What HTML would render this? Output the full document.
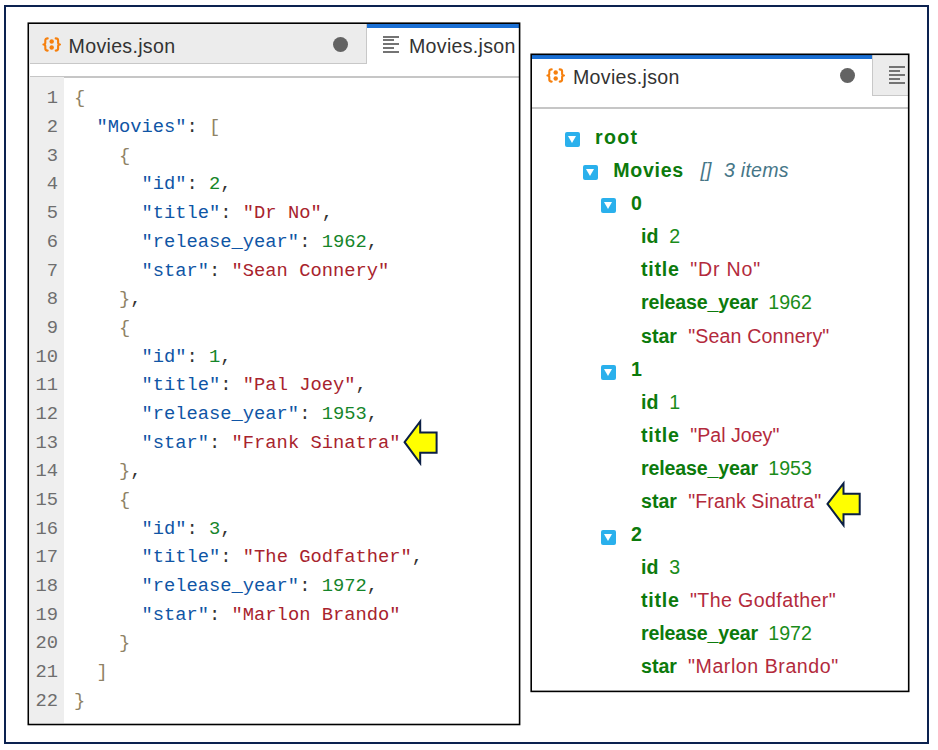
<!DOCTYPE html>
<html><head><meta charset="utf-8">
<style>
*{margin:0;padding:0;box-sizing:border-box}
html,body{width:938px;height:750px;background:#fff;overflow:hidden;position:relative;font-family:"Liberation Sans",sans-serif}
.abs{position:absolute}
#outer{left:4px;top:5px;width:925px;height:739px;border:2px solid #0c2250}
#lp{left:30px;top:24px;width:489px;height:699px;background:#fff;overflow:hidden}
#rp{left:532px;top:55px;width:376px;height:635px;background:#fff;overflow:hidden}
.tabtxt{font-size:19.6px;color:#333;white-space:nowrap;letter-spacing:0.3px}
.gut{background:#eeeeee}
pre{font-family:"Liberation Mono",monospace;font-size:18.77px;line-height:28.69px;white-space:pre}
.k{color:#0f55a5}.s{color:#a8232d}.n{color:#15852a}.p{color:#8f8265}.c{color:#333}
.ln{color:#6e6e6e;text-align:right}
.tree{font-size:19.6px;white-space:nowrap}
.tree span{position:absolute;line-height:normal}
.kb{font-weight:bold;color:#0c7a0c}
.sv{color:#b32a3c}
.nv{color:#1a8c1a}
.it{font-style:italic;color:#467687}
.tg{position:absolute;width:15px;height:15px;background:#2ab0ec;border-radius:2px}
.tg:after{content:"";position:absolute;left:3.4px;top:4px;border-left:4.6px solid transparent;border-right:4.6px solid transparent;border-top:7.6px solid #fff}
.dot{position:absolute;width:15px;height:15px;border-radius:50%;background:#636363}
.lines{position:absolute;width:16px;height:17px}
.lines i{position:absolute;left:0;height:2px;background:#747474}
</style></head><body>
<div id="outer" class="abs"></div>

<!-- LEFT PANEL -->
<div id="lp" class="abs">
  <!-- inactive tab -->
  <div class="abs" style="left:0;top:0;width:337px;height:40px;background:#ececec;border-right:1px solid #c8c8c8;border-bottom:1px solid #c8c8c8"></div>
  <svg class="abs" style="left:12px;top:13px" width="21" height="16" viewBox="0 0 21 16"><g fill="none" stroke="#f6800e" stroke-width="2.1" stroke-linecap="round" stroke-linejoin="round"><path d="M5.7,1.4 C4.2,1.4 3.3,2 3.3,3.5 L3.3,5.8 C3.3,6.8 2.6,7.5 1.4,7.5 C2.6,7.5 3.3,8.2 3.3,9.2 L3.3,11.5 C3.3,13 4.2,13.6 5.7,13.6"/><path d="M13.7,1.4 C15.2,1.4 16.1,2 16.1,3.5 L16.1,5.8 C16.1,6.8 16.8,7.5 18,7.5 C16.8,7.5 16.1,8.2 16.1,9.2 L16.1,11.5 C16.1,13 15.2,13.6 13.7,13.6"/></g><circle cx="9.7" cy="4.5" r="2.2" fill="#f6800e"/><circle cx="9.7" cy="10.5" r="2.2" fill="#f6800e"/></svg>
  <div class="abs tabtxt" style="left:38.6px;top:10.8px">Movies.json</div>
  <div class="dot" style="left:303.3px;top:12.7px"></div>
  <!-- active tab -->
  <div class="abs" style="left:337px;top:0;width:160px;height:4px;background:#1a6fd4"></div>
  <div class="lines" style="left:353px;top:11.5px"><i style="top:0;width:16px"></i><i style="top:3.8px;width:11px"></i><i style="top:7.5px;width:16px"></i><i style="top:11.4px;width:11px"></i><i style="top:15.2px;width:16px"></i></div>
  <div class="abs tabtxt" style="left:379px;top:11px">Movies.json</div>
  <!-- editor top line -->
  <div class="abs" style="left:0;top:52px;width:500px;height:1.5px;background:#c6c6c6"></div>
  <!-- gutter -->
  <div class="abs gut" style="left:0;top:53px;width:34px;height:660px"></div>
  <pre class="abs ln" style="left:0;top:60.4px;width:28px">1
2
3
4
5
6
7
8
9
10
11
12
13
14
15
16
17
18
19
20
21
22</pre>
  <pre class="abs" style="left:43.9px;top:60.4px"><span class="p">{</span>
  <span class="k">"Movies"</span><span class="c">: </span><span class="p">[</span>
    <span class="p">{</span>
      <span class="k">"id"</span><span class="c">: </span><span class="n">2</span><span class="c">,</span>
      <span class="k">"title"</span><span class="c">: </span><span class="s">"Dr No"</span><span class="c">,</span>
      <span class="k">"release_year"</span><span class="c">: </span><span class="n">1962</span><span class="c">,</span>
      <span class="k">"star"</span><span class="c">: </span><span class="s">"Sean Connery"</span>
    <span class="p">}</span><span class="c">,</span>
    <span class="p">{</span>
      <span class="k">"id"</span><span class="c">: </span><span class="n">1</span><span class="c">,</span>
      <span class="k">"title"</span><span class="c">: </span><span class="s">"Pal Joey"</span><span class="c">,</span>
      <span class="k">"release_year"</span><span class="c">: </span><span class="n">1953</span><span class="c">,</span>
      <span class="k">"star"</span><span class="c">: </span><span class="s">"Frank Sinatra"</span>
    <span class="p">}</span><span class="c">,</span>
    <span class="p">{</span>
      <span class="k">"id"</span><span class="c">: </span><span class="n">3</span><span class="c">,</span>
      <span class="k">"title"</span><span class="c">: </span><span class="s">"The Godfather"</span><span class="c">,</span>
      <span class="k">"release_year"</span><span class="c">: </span><span class="n">1972</span><span class="c">,</span>
      <span class="k">"star"</span><span class="c">: </span><span class="s">"Marlon Brando"</span>
    <span class="p">}</span>
  <span class="p">]</span>
<span class="p">}</span></pre>
</div>

<!-- RIGHT PANEL -->
<div id="rp" class="abs">
  <div class="abs" style="left:0;top:0;width:340px;height:4px;background:#1a6fd4"></div>
  <svg class="abs" style="left:14px;top:13px" width="21" height="16" viewBox="0 0 21 16"><g fill="none" stroke="#f6800e" stroke-width="2.1" stroke-linecap="round" stroke-linejoin="round"><path d="M5.7,1.4 C4.2,1.4 3.3,2 3.3,3.5 L3.3,5.8 C3.3,6.8 2.6,7.5 1.4,7.5 C2.6,7.5 3.3,8.2 3.3,9.2 L3.3,11.5 C3.3,13 4.2,13.6 5.7,13.6"/><path d="M13.7,1.4 C15.2,1.4 16.1,2 16.1,3.5 L16.1,5.8 C16.1,6.8 16.8,7.5 18,7.5 C16.8,7.5 16.1,8.2 16.1,9.2 L16.1,11.5 C16.1,13 15.2,13.6 13.7,13.6"/></g><circle cx="9.7" cy="4.5" r="2.2" fill="#f6800e"/><circle cx="9.7" cy="10.5" r="2.2" fill="#f6800e"/></svg>
  <div class="abs tabtxt" style="left:41px;top:11px">Movies.json</div>
  <div class="dot" style="left:307.7px;top:12.7px"></div>
  <!-- inactive tab -->
  <div class="abs" style="left:340px;top:0;width:40px;height:41px;background:#ececec;border-left:1px solid #c8c8c8;border-bottom:1px solid #c8c8c8"></div>
  <div class="lines" style="left:357.3px;top:11.4px"><i style="top:0;width:16px"></i><i style="top:3.9px;width:11px"></i><i style="top:7.8px;width:16px"></i><i style="top:11.7px;width:11px"></i><i style="top:15.5px;width:16px"></i></div>
  <div class="abs" style="left:0;top:52px;width:380px;height:1.5px;background:#c6c6c6"></div>
</div>

<div class="tree">
<div class="tg" style="left:565px;top:131.9px"></div>
<span class="kb" style="left:595.0px;top:126.3px;letter-spacing:1.33px">root</span>
<div class="tg" style="left:583px;top:164.9px"></div>
<span class="kb" style="left:613.2px;top:159.3px;letter-spacing:0.72px">Movies</span>
<span class="it" style="left:700.5px;top:159.3px">[]</span><span class="it" style="left:724px;top:159.3px;letter-spacing:0.23px">3 items</span>
<div class="tg" style="left:601px;top:198.0px"></div>
<span class="kb" style="left:631.0px;top:192.4px">0</span>
<span class="kb" style="left:641.0px;top:225.4px">id</span>
<span class="nv" style="left:669.3px;top:225.4px">2</span>
<span class="kb" style="left:641.0px;top:258.4px;letter-spacing:0.75px">title</span>
<span class="sv" style="left:690.3px;top:258.4px;letter-spacing:0.8px">"Dr No"</span>
<span class="kb" style="left:641.0px;top:291.4px;letter-spacing:-0.16px">release_year</span>
<span class="nv" style="left:768.3px;top:291.4px">1962</span>
<span class="kb" style="left:641.0px;top:324.5px">star</span>
<span class="sv" style="left:688.2px;top:324.5px;letter-spacing:0.15px">"Sean Connery"</span>
<div class="tg" style="left:601px;top:364.6px"></div>
<span class="kb" style="left:631.0px;top:357.5px">1</span>
<span class="kb" style="left:641.0px;top:390.5px">id</span>
<span class="nv" style="left:669.3px;top:390.5px">1</span>
<span class="kb" style="left:641.0px;top:423.6px;letter-spacing:0.75px">title</span>
<span class="sv" style="left:690.3px;top:423.6px">"Pal Joey"</span>
<span class="kb" style="left:641.0px;top:456.6px;letter-spacing:-0.16px">release_year</span>
<span class="nv" style="left:768.3px;top:456.6px">1953</span>
<span class="kb" style="left:641.0px;top:489.6px">star</span>
<span class="sv" style="left:688.2px;top:489.6px;letter-spacing:0.1px">"Frank Sinatra"</span>
<div class="tg" style="left:601px;top:529.8px"></div>
<span class="kb" style="left:631.0px;top:522.7px">2</span>
<span class="kb" style="left:641.0px;top:555.7px">id</span>
<span class="nv" style="left:669.3px;top:555.7px">3</span>
<span class="kb" style="left:641.0px;top:588.7px;letter-spacing:0.75px">title</span>
<span class="sv" style="left:690.0px;top:588.7px;letter-spacing:0.39px">"The Godfather"</span>
<span class="kb" style="left:641.0px;top:621.8px;letter-spacing:-0.16px">release_year</span>
<span class="nv" style="left:768.3px;top:621.8px">1972</span>
<span class="kb" style="left:641.0px;top:654.8px">star</span>
<span class="sv" style="left:688.0px;top:654.8px;letter-spacing:0.55px">"Marlon Brando"</span>
</div>

<svg class="abs" style="left:0;top:0" width="938" height="750" viewBox="0 0 938 750">
<rect x="28.3" y="23.2" width="491.3" height="701.3" fill="none" stroke="#000" stroke-width="1.6"/>
<rect x="531.2" y="54.3" width="377.5" height="637.1" fill="none" stroke="#000" stroke-width="1.6"/>
<path d="M404.6 442.2 L420.2 421.5 L420.2 432.5 L436.6 432.5 L436.6 452.7 L420.2 452.7 L420.2 463.3 Z" fill="#ffff00" stroke="#0b1f45" stroke-width="2" stroke-linejoin="miter"/>
<path d="M827.5 503.9 L843.5 483.3 L843.5 493.7 L859.7 493.7 L859.7 514.3 L843.5 514.3 L843.5 525.2 Z" fill="#ffff00" stroke="#0b1f45" stroke-width="2" stroke-linejoin="miter"/>
</svg>
</body></html>
